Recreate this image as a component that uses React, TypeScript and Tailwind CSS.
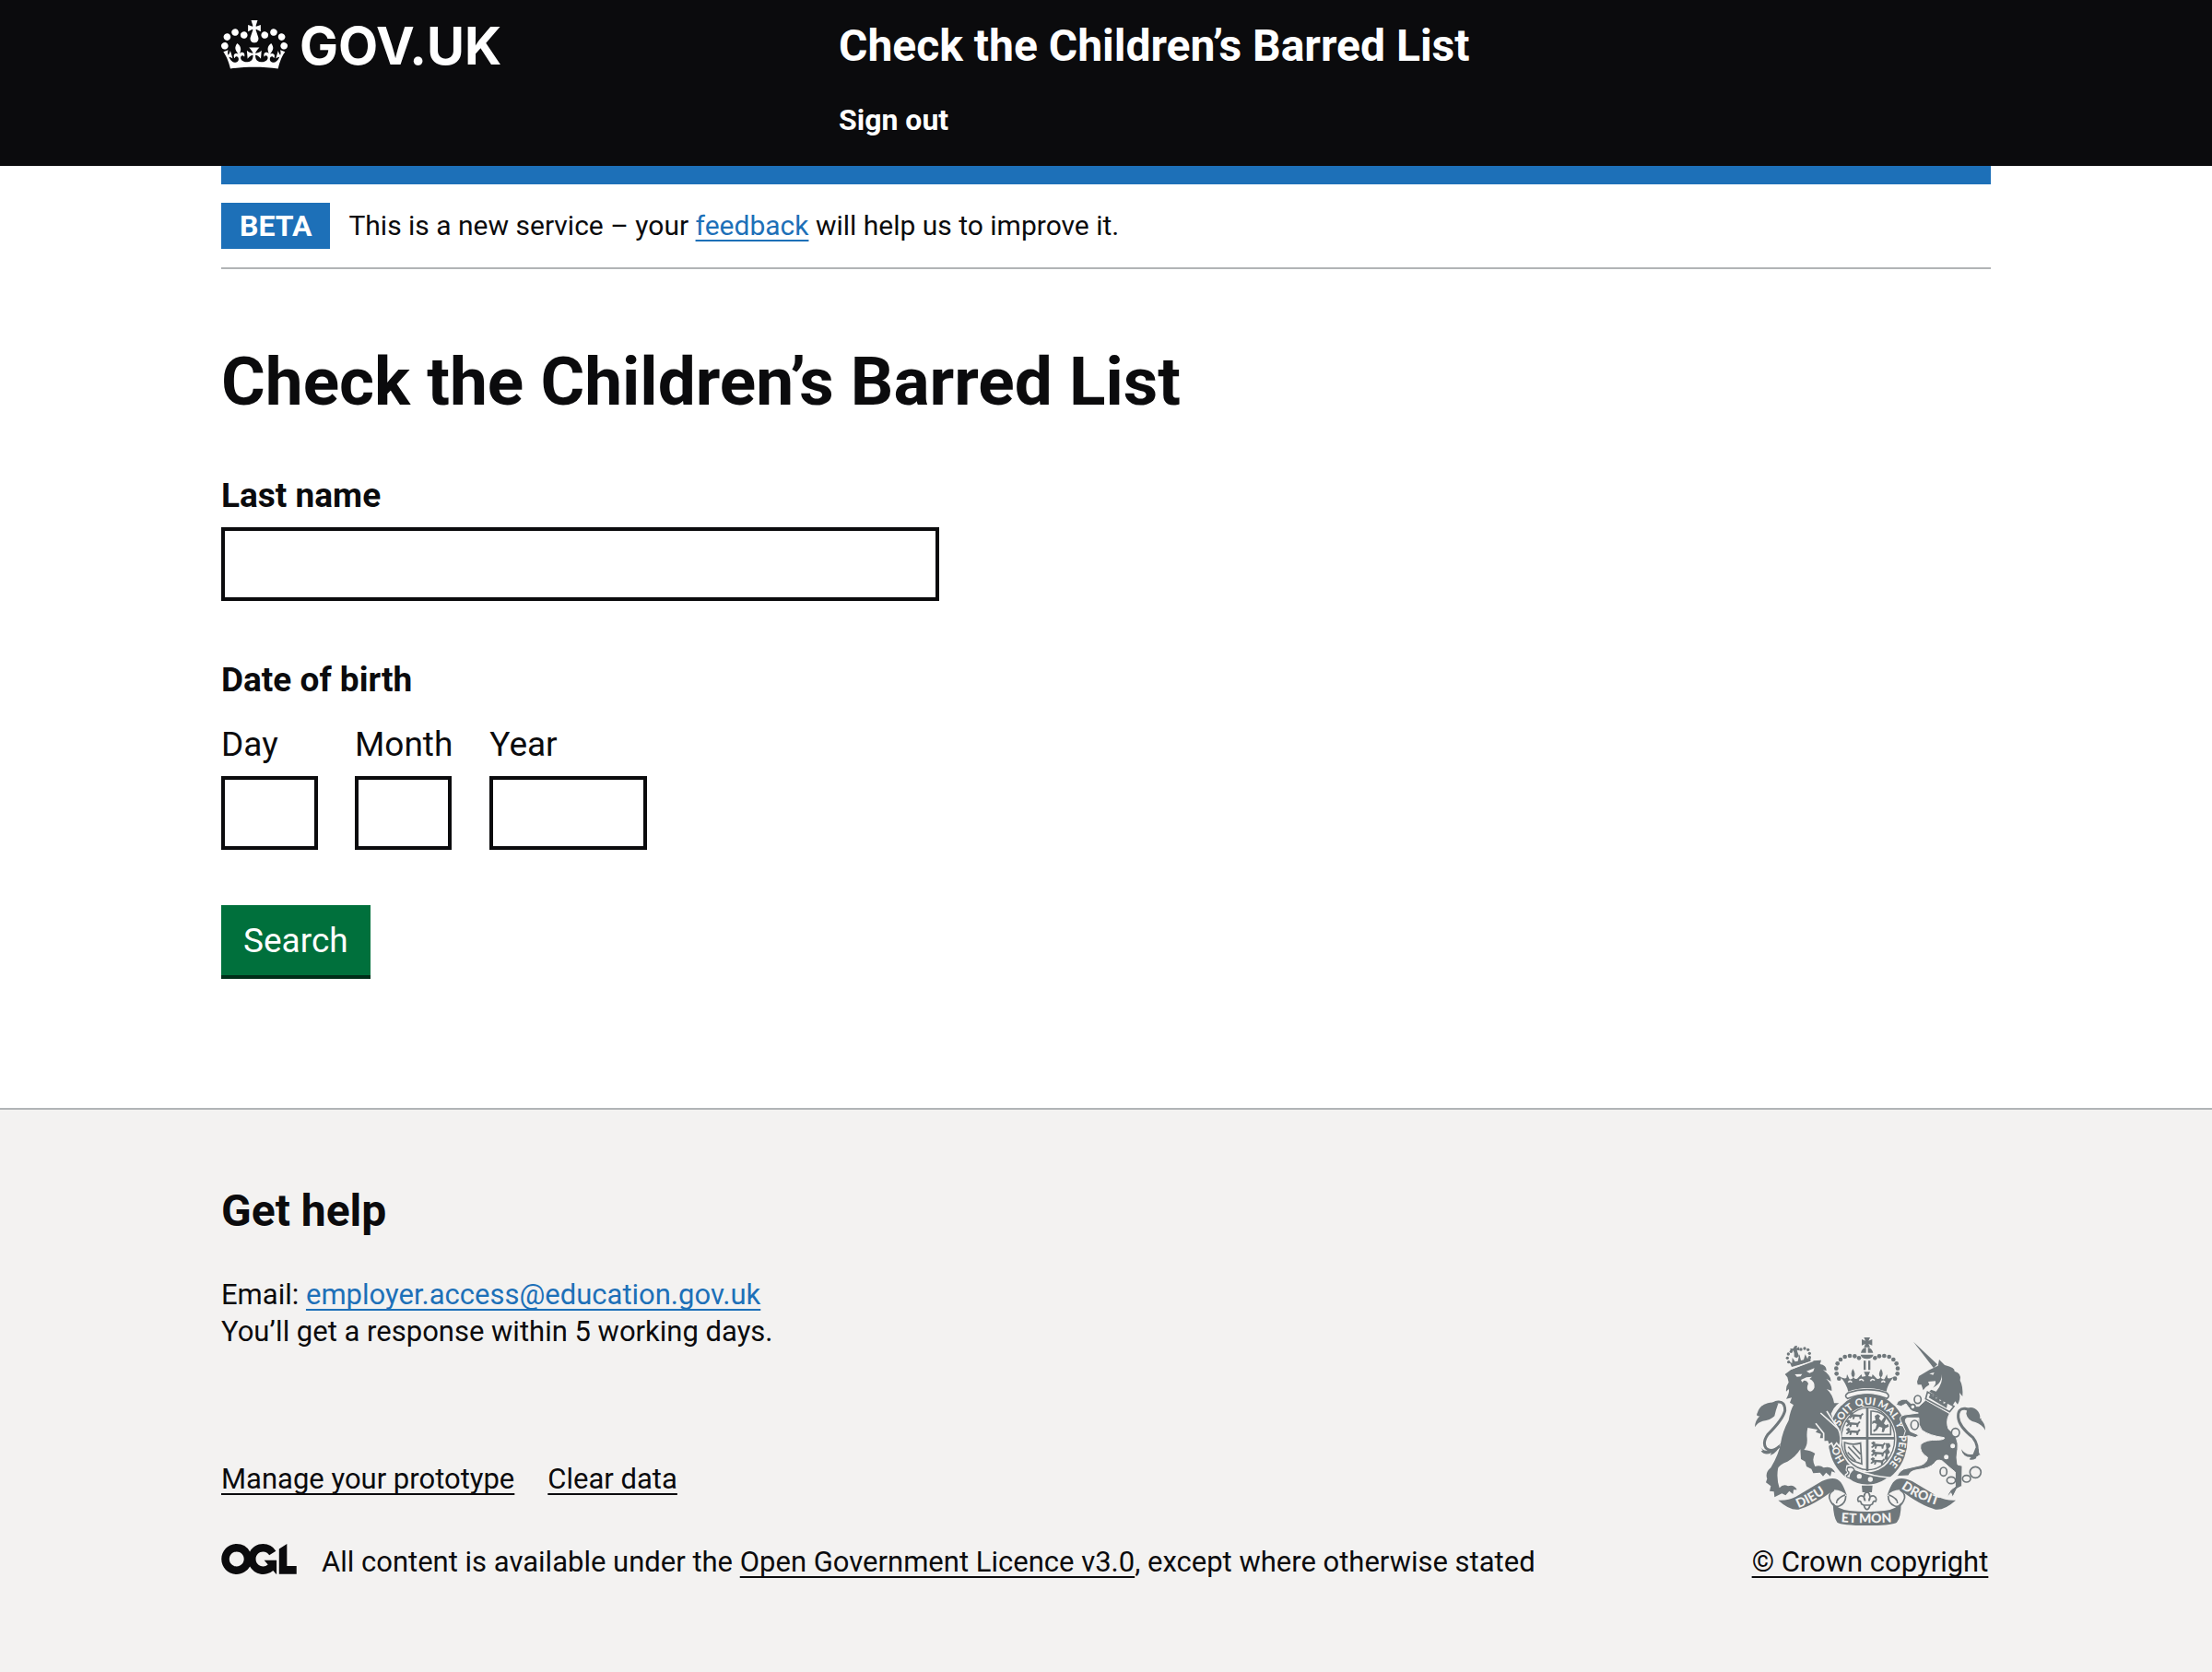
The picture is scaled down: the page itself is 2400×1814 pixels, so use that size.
import type { ReactNode } from "react";

const CROWN =
  "M25 30.2c3.5 1.5 7.7-.2 9.1-3.7 1.5-3.6-.2-7.8-3.9-9.2-3.6-1.4-7.6.3-9.1 3.9-1.4 3.5.3 7.5 3.9 9zM9 39.5c3.6 1.5 7.8-.2 9.2-3.7 1.5-3.6-.2-7.8-3.9-9.1-3.6-1.5-7.6.2-9.1 3.8-1.4 3.5.3 7.5 3.8 9zM4.4 57.2c3.5 1.5 7.7-.2 9.1-3.8 1.5-3.6-.2-7.7-3.9-9.1-3.5-1.5-7.6.3-9.1 3.8-1.4 3.5.3 7.6 3.9 9.1zm38.3-21.4c3.5 1.5 7.7-.2 9.1-3.8 1.5-3.6-.2-7.7-3.9-9.1-3.6-1.5-7.6.3-9.1 3.8-1.3 3.6.4 7.7 3.9 9.1zm64.4-5.6c-3.6 1.5-7.8-.2-9.1-3.7-1.5-3.6.2-7.8 3.8-9.2 3.6-1.4 7.7.3 9.2 3.9 1.3 3.5-.4 7.5-3.9 9zm15.9 9.3c-3.6 1.5-7.7-.2-9.1-3.7-1.5-3.6.2-7.8 3.7-9.1 3.6-1.5 7.7.2 9.2 3.8 1.5 3.5-.3 7.5-3.8 9zm4.7 17.7c-3.6 1.5-7.8-.2-9.2-3.8-1.5-3.6.2-7.7 3.9-9.1 3.6-1.5 7.7.3 9.2 3.8 1.3 3.5-.4 7.6-3.9 9.1zM89.3 35.8c-3.6 1.5-7.8-.2-9.2-3.8-1.4-3.6.2-7.7 3.9-9.1 3.6-1.5 7.7.3 9.2 3.8 1.4 3.6-.3 7.7-3.9 9.1zM69.7 17.7l8.9 4.7V9.3l-8.9 2.8c-.2-.3-.5-.6-.9-.9L72.4 0H59.6l3.5 11.2c-.3.3-.6.5-.9.9l-8.8-2.8v13.1l8.8-4.7c.3.3.6.7.9.9l-5 15.4v.1c-.2.8-.4 1.6-.4 2.4 0 4.1 3.1 7.5 7 8.1h.2c.3 0 .7.1 1 .1.4 0 .7 0 1-.1h.2c4-.6 7.1-4.1 7.1-8.1 0-.8-.1-1.7-.4-2.4V34l-5.1-15.4c.4-.2.7-.6 1-.9zM66 92.8c16.9 0 32.8 1.1 47.1 3.2 4-16.9 8.9-26.7 14-33.5l-9.6-3.4c1 4.9 1.1 7.2 0 10.2-1.5-1.4-3-4.3-4.2-8.7L108.6 76c2.8-2 5-3.2 7.5-3.3-4.4 9.4-10 11.9-13.6 11.2-4.3-.8-6.3-4.6-5.6-7.9 1-4.7 5.7-5.9 8-.5 4.3-8.7-3-11.4-7.6-8.8 7.1-7.2 7.9-13.5 2.1-21.1-8 6.1-8.1 12.3-4.5 20.8-4.7-5.4-12.1-2.5-9.5 6.2 3.4-5.2 7.9-2 7.2 3.1-.6 4.3-6.4 7.8-13.5 7.2-10.3-.9-10.9-8-11.2-13.8 2.5-.5 7.1 1.8 11 7.3L80.2 60c-4.1 4.4-8 5.3-12.3 5.4 1.4-4.4 8-11.6 8-11.6H55.5s6.4 7.2 7.9 11.6c-4.2-.1-8-1-12.3-5.4l1.4 16.4c3.9-5.5 8.5-7.7 10.9-7.3-.3 5.8-.9 12.8-11.1 13.8-7.2.6-12.9-2.9-13.5-7.2-.7-5 3.8-8.3 7.1-3.1 2.7-8.7-4.6-11.6-9.4-6.2 3.7-8.5 3.6-14.7-4.6-20.8-5.8 7.6-5 13.9 2.2 21.1-4.7-2.6-11.9.1-7.7 8.8 2.3-5.5 7.1-4.2 8.1.5.7 3.3-1.3 7.1-5.7 7.9-3.5.7-9-1.8-13.5-11.2 2.5.1 4.7 1.3 7.5 3.3l-4.7-15.4c-1.2 4.4-2.7 7.2-4.3 8.7-1.1-3-.9-5.3 0-10.2l-9.5 3.4c5 6.9 9.9 16.7 14 33.5 14.8-2.1 30.8-3.2 47.7-3.2z";

const OGL =
  "M421.5 142.8V.1l-50.7 32.3v161.1h112.4v-50.7zm-122.3-9.6A47.12 47.12 0 0 1 221 97.8c0-26 21.1-47.1 47.1-47.1 16.7 0 31.4 8.7 39.7 21.8l42.7-27.2A97.63 97.63 0 0 0 268.1 0c-36.5 0-68.3 20.1-85.1 49.7A98 98 0 0 0 97.8 0C43.9 0 0 43.9 0 97.8s43.9 97.8 97.8 97.8c36.5 0 68.3-20.1 85.1-49.7a97.76 97.76 0 0 0 149.6 25.4l19.4 22.2h3v-87.8h-80l24.3 27.5zM97.8 145c-26 0-47.1-21.1-47.1-47.1s21.1-47.1 47.1-47.1 47.1 21.1 47.1 47.1S123.8 145 97.8 145";

const LION =
  "M170 180 L190 165 L262 136 L288 134 L284 147 Q306 150 305 169 L294 166 Q320 184 320 203 L304 194 Q324 214 322 234 L306 228 Q326 246 330 274 L346 274 Q328 286 320 308 L330 338 L348 372 Q352 396 346 414 L338 404 L328 418 L322 404 L312 411 L308 399 L296 400 L301 388 L284 388 L287 374 L270 368 L276 360 L244 354 Q240 372 242 388 Q244 412 232 426 Q254 428 268 438 Q256 458 268 480 Q284 474 296 484 Q322 476 334 500 L322 496 L318 512 L304 500 L294 512 L284 500 L262 502 L256 488 L240 480 L236 464 L222 456 L220 424 Q204 450 178 464 Q150 474 147 488 Q142 520 152 550 Q164 536 180 544 Q200 538 209 556 L198 556 L196 570 L184 560 L172 574 L160 568 L136 580 L134 562 L120 560 L124 544 L108 532 L112 520 Q104 500 124 484 Q150 440 156 404 Q162 366 182 330 Q188 296 198 280 L186 272 L192 256 L174 260 Q186 238 182 228 L174 236 Q172 220 182 206 L178 190 Z";

const LION_PAW = "M306 300 L344 358 Q356 384 348 416 L338 404 L328 418 L322 404 L312 411 L308 399 L296 400 L296 372 L270 340";

const UNICORN =
  "M628 264 L706 308 Q692 330 702 358 Q738 384 732 424 Q726 452 732 474 L747 478 L746 544 L730 552 L716 580 L710 566 L698 580 Q704 556 724 546 L724 498 Q706 484 682 462 Q664 454 656 470 Q640 486 606 490 Q586 492 578 500 L572 510 L534 512 Q548 488 564 487 L612 476 Q634 468 634 450 Q606 434 612 408 Q630 392 668 394 Q694 392 688 386 Q640 380 616 362 Q602 345 606 322 L568 322 Q560 324 562 334 L578 366 L606 378 L594 386 L572 380 L556 384 L562 364 L546 330 Q540 316 560 312 L604 306 L584 300 Q570 286 564 276 L548 284 L532 280 L538 268 Q552 258 566 262 L590 284 L606 284 Z";

/** One small passant lion; three of them fill a quarter of the shield. */
const PASSANT =
  "M2 6l8-6 7 4-3 4 26 2 6-6 4 4-6 6-2 10h-5l-1-7-14-1-3 8h-5l1-8-9 6-4-3 7-7z";

const crownDots = [
  [346, 194], [338, 178], [337, 161], [341, 145], [351, 132], [365, 123], [381, 120], [397, 121], [411, 127],
  [528, 194], [536, 178], [537, 161], [533, 145], [523, 132], [509, 123], [493, 120], [477, 121], [463, 127],
];

const lionCrownDots = [
  [182, 140], [178, 127], [181, 114], [190, 106], [222, 99], [234, 96], [245, 100], [250, 112], [250, 125],
];

function RoyalArms() {
  return (
    <svg viewBox="72 60 750 612" className="h-[204px] w-[250px] fill-[#6f777b] font-['Lato','Liberation_Sans',sans-serif] font-black" aria-hidden="true">
      <defs>
        <path id="garter" d="M440 501 A97 109 0 0 1 343 392 A97 109 0 0 1 440 279 A101 113 0 0 1 541 392 A97 109 0 0 1 440 501" />
        <path id="motto-left" d="M210 617 Q262 598 330 546" />
        <path id="motto-mid" d="M345 660 Q437 668 540 659" />
        <path id="motto-right" d="M546 550 Q600 588 690 614" />
      </defs>

      {/* lion */}
      {lionCrownDots.map(([x, y]) => (
        <circle key={`${x}-${y}`} cx={x} cy={y} r="5" />
      ))}
      <path d="M202 88l8-1-2 8 8-4 2 12-9-2 3 10 4 10-8 6-8-4v-12l-3-8-8 4-2-11 9 1z" />
      <path d="M184 138l8 18 62-17-2-20-9 10-7-14-5 18-9 2-5-20-5 22-9 2-9-13-1 18z" />
      <path d={LION} />
      <path d="M188 163L262 136" className="fill-none stroke-[#f3f2f1]" strokeWidth="4" />
      <path
        d="M202 180l24-1-5 8-12 1zM240 170l26-10-4 11-12 5zM222 198l18-8 18-2-8 7q18 8 16 28-4 12-14 13-12-3-9-18l3-8q-4-10-14-10l-6 6z"
        className="fill-[#f3f2f1]"
      />
      <path
        d="M152 414 Q126 438 108 420 Q96 402 114 376 Q164 326 170 298 Q170 268 148 270 Q132 272 122 284"
        className="fill-none stroke-[#6f777b]"
        strokeWidth="9"
      />
      <path d="M72 352 Q72 332 88 316 Q74 318 80 306 Q88 280 114 274 Q132 268 148 276 Q140 296 136 316 Q122 330 98 332 Q82 336 72 352z" />
      <path d="M88 414 Q98 430 112 428 Q134 432 156 404 Q146 436 122 444 L126 436 Q104 446 92 430 L98 428z" />

      {/* imperial crown */}
      {crownDots.map(([x, y]) => (
        <circle key={`${x}-${y}`} cx={x} cy={y} r="7" />
      ))}
      <path d="M427 60h20l-5 11 12-5v20l-12-5 5 11h-20l5-11-12 5V66l12 5z" />
      <path d="M417 110q4-16 17-17v17zM440 93q13 2 17 17h-17zM416 116h42q-2 12-21 14-19-2-21-14z" />
      <path d="M426 136h7v30h-7zM441 136h7v30h-7z" />
      <path d="M350 188q14 8 20 4l2-12 8 16q10 2 12-6-12-8-1-28 12 18 2 28 4 8 12 4l14-14 2 8 12-2-6-14h20l-6 14 12 2 2-8 14 14q8 4 12-4-10-10 2-28 11 20-1 28 2 8 12 6l8-16 2 12q6 4 20-4-20 24-24 48-64-22-124 0-6-26-26-48z" />
      <path
        d="M376 206q6-8 12 0M484 206q6-8 12 0M412 200q8-8 14 2M448 202q6-10 14-2"
        className="fill-none stroke-[#f3f2f1]"
        strokeWidth="5"
      />
      <path
        d="M376 240q61-20 124 0 14 10 2 19-64-26-128 0-14-9 2-19z"
        className="fill-[#f3f2f1] stroke-[#6f777b]"
        strokeWidth="5"
      />

      {/* garter and shield */}
      <ellipse cx="440" cy="392" rx="129" ry="148" />
      <ellipse cx="440" cy="392" rx="93" ry="107" className="fill-[#f3f2f1]" />
      <ellipse cx="440" cy="390" rx="87" ry="101" className="fill-none stroke-[#6f777b]" strokeWidth="4" />
      <path d="M434 289h8v206h-8zM352 384h176v8H352z" />
      <g transform="translate(376 302)"><path d={PASSANT} /></g>
      <g transform="translate(366 328)"><path d={PASSANT} /></g>
      <g transform="translate(366 354)"><path d={PASSANT} /></g>
      <g transform="translate(448 398)"><path d={PASSANT} /></g>
      <g transform="translate(448 424)"><path d={PASSANT} /></g>
      <g transform="translate(446 450)"><path d={PASSANT} /></g>
      <path d="M498 404h12l4 10-8 8 6 12-8 8 2 12-8 6-4-6 4-12-4-12 6-8z" />
      <path d="M450 300 Q490 298 514 340 V376 H450z" className="fill-none stroke-[#6f777b]" strokeWidth="5" />
      <path d="M462 316l10-6 8 6-4 8 8 8 10-14 6 6-8 16 6 6 8-4 2 8-12 6-4 12h-7l2-14-10-4-8 12-10 6-2-6 8-6 4-14-8-4-8 4 2-10 10-2z" />
      <path
        d="M364 402 Q362 446 392 462 L420 472 L416 404 Q390 412 364 402z M376 416L414 456M374 434L400 462M390 412L416 440"
        className="fill-none stroke-[#6f777b]"
        strokeWidth="5"
      />
      <path
        d="M372 478 Q392 474 398 490 Q450 512 508 516 Q478 542 437 541 Q400 540 376 520 Q360 508 372 504 Q378 498 370 492z"
        className="stroke-[#f3f2f1]"
        strokeWidth="5"
      />
      <path
        d="M374 484q18-6 22 8-14 10-14 26-12-2-12-8 10-4 8-12-8-4-4-14z"
        className="fill-[#f3f2f1] stroke-[#6f777b]"
        strokeWidth="4"
      />
      <circle cx="412" cy="512" r="8" className="fill-[#f3f2f1]" />
      <circle cx="448" cy="522" r="8" className="fill-[#f3f2f1]" />
      <path d={LION_PAW} className="stroke-[#f3f2f1]" strokeWidth="5" />
      <path d="M286 306L344 358" className="fill-none stroke-[#f3f2f1]" strokeWidth="5" />
      <g className="fill-[#f3f2f1] text-[33px]">
        <text><textPath href="#garter" startOffset="88">HO</textPath></text>
        <text><textPath href="#garter" startOffset="205">SOIT</textPath></text>
        <text><textPath href="#garter" startOffset="289">QUI</textPath></text>
        <text><textPath href="#garter" startOffset="358">MAL</textPath></text>
        <text><textPath href="#garter" startOffset="440">Y</textPath></text>
        <text><textPath href="#garter" startOffset="482">PENSE</textPath></text>
      </g>

      {/* unicorn */}
      <path d="M588 74 L666 148 L654 160z" />
      <path d="M600 204 L606 186 L640 166 L668 152 L672 132 L690 150 Q724 158 722 170 Q746 176 740 200 Q750 218 748 252 L738 240 Q742 262 732 278 L724 268 L714 284 L640 236 Q664 216 660 202 L636 204 L640 214 L628 222 L620 232 L614 214 L602 214z" />
      <path d="M640 228 Q682 214 680 180 Q686 208 662 236z" className="fill-[#f3f2f1]" />
      <path d="M640 178l16-4-4 8z" className="fill-[#f3f2f1]" />
      <path d={UNICORN} className="stroke-[#f3f2f1]" strokeWidth="3" />
      <path d="M634 238l-6 22 78 42 14-18z" className="fill-[#f3f2f1] stroke-[#6f777b]" strokeWidth="5" />
      <path d="M638 256l6-14 8 10 8-8 2 16 10-8 2 16 12-8v16l14-6-4 20z" />
      <path
        d="M794 446 Q802 410 782 386 Q736 350 734 320 Q732 290 756 292 Q770 294 776 304"
        className="fill-none stroke-[#6f777b]"
        strokeWidth="9"
      />
      <path d="M764 290 Q784 284 798 300 Q808 314 804 324 Q812 322 808 328 Q822 340 822 362 Q812 344 790 336 Q764 330 760 308z" />
      <path d="M744 424 Q760 446 782 440 L790 420 L800 424 Q800 438 806 442 Q792 444 792 454 Q776 462 770 456 L776 450 Q748 450 744 424z" />
      <g className="fill-[#f3f2f1] stroke-[#6f777b]" strokeWidth="5">
        <ellipse cx="602" cy="262" rx="11" ry="13" />
        <circle cx="586" cy="286" r="8" />
        <ellipse cx="592" cy="345" rx="12" ry="15" />
        <ellipse cx="725" cy="370" rx="13" ry="14" />
        <circle cx="716" cy="413" r="10" />
        <circle cx="695" cy="449" r="10" />
        <ellipse cx="686" cy="497" rx="11" ry="14" />
        <ellipse cx="711" cy="525" rx="14" ry="11" />
        <ellipse cx="761" cy="520" rx="13" ry="11" />
        <circle cx="790" cy="499" r="18" />
      </g>

      {/* motto ribbon */}
      {["", "matrix(-1 0 0 1 874 0)"].map((transform) => (
        <g key={transform} transform={transform}>
          <path d="M148 590 Q180 592 206 578 Q250 552 290 528 Q334 508 352 532 Q362 546 372 576 Q356 556 330 556 Q262 608 214 620 Q186 624 148 590z" />
          <path
            d="M330 556 Q306 572 318 592 Q330 616 348 608 Q368 600 368 576 M338 600 Q336 584 366 572"
            className="fill-none stroke-[#6f777b]"
            strokeWidth="5"
          />
        </g>
      ))}
      <path d="M326 598 Q342 620 380 624 Q437 630 494 624 Q532 620 548 598 Q548 648 534 662 Q520 672 437 672 Q354 672 340 662 Q328 648 326 598z" />
      <path d="M420 542h35l-2 22h-31z" />
      <path
        d="M437 560q-16 16-6 32-2-18-16-16-12 6-6 18 8-4 10 8l8 4q4 14 10 14t10-14l8-4q2-12 10-8 6-12-6-18-14-2-16 16 10-16-6-32zM424 606h26"
        className="fill-[#f3f2f1] stroke-[#6f777b]"
        strokeWidth="5"
      />
      <g className="fill-[#f3f2f1] text-[42px]">
        <text><textPath href="#motto-left" startOffset="4">DIEU</textPath></text>
        <text><textPath href="#motto-mid" startOffset="8">ET MON</textPath></text>
        <text><textPath href="#motto-right" startOffset="2">DROIT</textPath></text>
      </g>
    </svg>
  );
}

function TextLink({ href = "#", className = "", children }: { href?: string; className?: string; children: ReactNode }) {
  return (
    <a href={href} className={`underline decoration-2 underline-offset-[5px] [text-decoration-skip-ink:none] ${className}`}>
      {children}
    </a>
  );
}

const dateParts = [
  { id: "day", label: "Day", width: "w-[105px]" },
  { id: "month", label: "Month", width: "w-[105px]" },
  { id: "year", label: "Year", width: "w-[171px]" },
];

export default function App() {
  return (
    <div className="flex min-h-screen flex-col bg-white font-['Roboto','Liberation_Sans',sans-serif] text-[31px] leading-[40px] text-[#0b0b0d]">
      <header className="bg-[#0b0b0d] text-white">
        <div className="mx-auto grid w-4/5 grid-cols-[1fr_2fr] gap-[45px] pt-[22px] pb-[30px] font-bold">
          <a href="#" className="flex items-start gap-[13px] self-start">
            <svg viewBox="0 0 132 97" className="h-[53px] w-[72px] fill-white" aria-hidden="true">
              <path d={CROWN} />
            </svg>
            <span className="font-['Inter','Liberation_Sans',sans-serif] text-[56px] leading-[56px]">GOV.UK</span>
          </a>
          <div>
            <a href="#" className="block text-5xl leading-[56px]">Check the Children’s Barred List</a>
            <nav className="pt-8 text-[32px]">
              <a href="#">Sign out</a>
            </nav>
          </div>
        </div>
      </header>

      <div className="mx-auto w-4/5 border-t-[20px] border-[#1d70b8]">
        <div className="flex items-center gap-5 border-b-2 border-[#b1b4b6] py-5">
          <strong className="flex h-[50px] items-center bg-[#1d70b8] px-5 text-[32px] text-white">BETA</strong>
          <p className="text-3xl leading-[42px]">
            This is a new service – your <TextLink className="text-[#1d70b8]">feedback</TextLink> will help us to improve it.
          </p>
        </div>

        <main className="pt-[82px] pb-[140px]">
          <h1 className="text-[73px] leading-[80px] font-bold">Check the Children’s Barred List</h1>
          <form className="flex flex-col items-start pt-[59px] text-[37px] leading-[50px]" onSubmit={(e) => e.preventDefault()}>
            <label htmlFor="last-name" className="font-bold">Last name</label>
            <input id="last-name" type="text" className="mt-[9px] h-20 w-[779px] border-4 border-[#0b0b0d] px-2.5" />

            <fieldset className="pt-[61px]">
              <legend className="contents font-bold">Date of birth</legend>
              <div className="flex gap-10 pt-5">
                {dateParts.map((part) => (
                  <div key={part.id} className="flex flex-col items-start">
                    <label htmlFor={part.id}>{part.label}</label>
                    <input
                      id={part.id}
                      type="text"
                      inputMode="numeric"
                      className={`mt-[9px] h-20 border-4 border-[#0b0b0d] px-2.5 ${part.width}`}
                    />
                  </div>
                ))}
              </div>
            </fieldset>

            <button type="submit" className="mt-[60px] h-20 border-b-4 border-[#002d18] bg-[#00703c] px-6 pt-0.5 text-white">
              Search
            </button>
          </form>
        </main>
      </div>

      <footer className="flex-1 border-t-2 border-[#b1b4b6] bg-[#f3f2f1]">
        <div className="mx-auto flex w-4/5 items-end justify-between pt-20 pb-[99px]">
          <div>
            <h2 className="text-5xl leading-[60px] font-bold">Get help</h2>
            <p className="pt-[41px]">
              Email: <TextLink href="mailto:employer.access@education.gov.uk" className="text-[#1d70b8]">employer.access@education.gov.uk</TextLink>
            </p>
            <p>You’ll get a response within 5 working days.</p>
            <ul className="flex gap-9 pt-[120px]">
              <li><TextLink>Manage your prototype</TextLink></li>
              <li><TextLink>Clear data</TextLink></li>
            </ul>
            <div className="flex gap-[27px] pt-[50px]">
              <svg viewBox="0 0 483.2 195.7" className="h-[33px] w-[82px] fill-[#0b0b0d]" aria-hidden="true">
                <path d={OGL} />
              </svg>
              <p>
                All content is available under the <TextLink>Open Government Licence v3.0</TextLink>, except where otherwise stated
              </p>
            </div>
          </div>
          <div className="flex min-w-[262px] flex-col items-center gap-5">
            <RoyalArms />
            <TextLink>© Crown copyright</TextLink>
          </div>
        </div>
      </footer>
    </div>
  );
}
